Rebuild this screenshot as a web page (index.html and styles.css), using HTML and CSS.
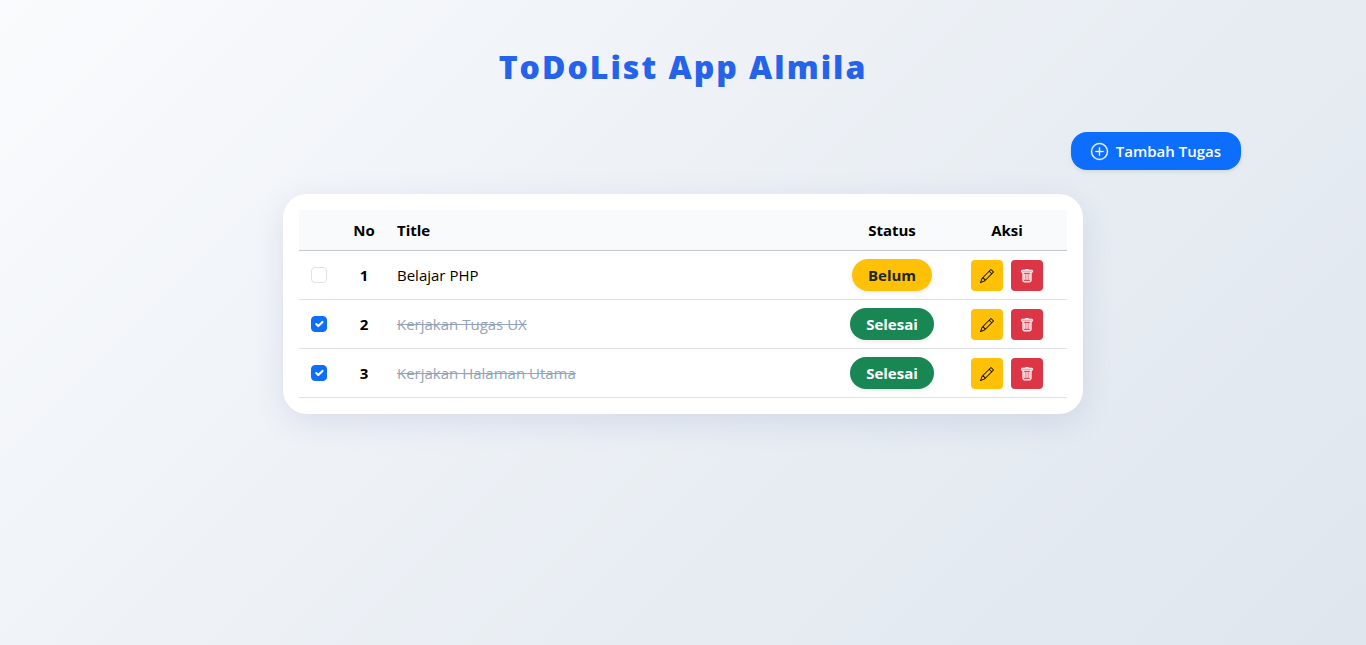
FILE: index.html
```html
<!DOCTYPE html>
<html lang="id">
<head>
<meta charset="utf-8">
<meta name="viewport" content="width=device-width, initial-scale=1">
<title>ToDoList App Almila</title>
<link rel="stylesheet" href="styles.css">
</head>
<body>
<svg class="sprite" aria-hidden="true">
  <symbol id="pencil" viewBox="0 0 16 16"><path d="M12.146.146a.5.5 0 0 1 .708 0l3 3a.5.5 0 0 1 0 .708l-10 10a.5.5 0 0 1-.168.11l-5 2a.5.5 0 0 1-.65-.65l2-5a.5.5 0 0 1 .11-.168zM11.207 2.5 13.5 4.793 14.793 3.5 12.5 1.207zm1.586 3L10.5 3.207 4 9.707V10h.5a.5.5 0 0 1 .5.5v.5h.5a.5.5 0 0 1 .5.5v.5h.293zm-9.761 5.175-.106.106-1.528 3.821 3.821-1.528.106-.106A.5.5 0 0 1 5 12.5V12h-.5a.5.5 0 0 1-.5-.5V11h-.5a.5.5 0 0 1-.468-.325"/></symbol>
  <symbol id="trash" viewBox="0 0 16 16"><path d="M5.500 5.500A.5.5 0 0 1 6 6v6a.5.5 0 0 1-1 0V6a.5.5 0 0 1 .5-.5m2.500 0a.5.5 0 0 1 .5.5v6a.5.5 0 0 1-1 0V6a.5.5 0 0 1 .5-.5m3 .5a.5.5 0 0 0-1 0v6a.5.5 0 0 0 1 0z"/><path d="M14.500 3a1 1 0 0 1-1 1H13v9a2 2 0 0 1-2 2H5a2 2 0 0 1-2-2V4h-.5a1 1 0 0 1-1-1V2a1 1 0 0 1 1-1H6a1 1 0 0 1 1-1h2a1 1 0 0 1 1 1h3.500a1 1 0 0 1 1 1zM4.118 4 4 4.059V13a1 1 0 0 0 1 1h6a1 1 0 0 0 1-1V4.059L11.882 4zM2.500 3h11V2h-11z"/></symbol>
</svg>
<main class="container">
  <h1 class="page-title">ToDoList App Almila</h1>
  <div class="toolbar">
    <button class="btn-add" type="button">
      <svg class="add-icon" viewBox="0 0 16 16" aria-hidden="true"><path d="M8 15A7 7 0 1 1 8 1a7 7 0 0 1 0 14m0 1A8 8 0 1 0 8 0a8 8 0 0 0 0 16"/><path d="M8 4a.5.5 0 0 1 .5.5v3h3a.5.5 0 0 1 0 1h-3v3a.5.5 0 0 1-1 0v-3h-3a.5.5 0 0 1 0-1h3v-3A.5.5 0 0 1 8 4"/></svg>
      Tambah Tugas
    </button>
  </div>
  <section class="card">
    <table class="tasks">
      <colgroup><col class="col-check"><col class="col-no"><col><col class="col-status"><col class="col-action"></colgroup>
      <thead>
        <tr><th></th><th scope="col">No</th><th class="title" scope="col">Title</th><th scope="col">Status</th><th scope="col">Aksi</th></tr>
      </thead>
      <tbody>
        <tr>
          <td><input class="check" type="checkbox" aria-labelledby="task-1"></td>
          <th scope="row">1</th>
          <td class="title" id="task-1">Belajar PHP</td>
          <td><span class="badge pending">Belum</span></td>
          <td><div class="actions"><button class="btn-icon edit" type="button" aria-label="Edit"><svg class="icon"><use href="#pencil"/></svg></button><button class="btn-icon delete" type="button" aria-label="Hapus"><svg class="icon"><use href="#trash"/></svg></button></div></td>
        </tr>
        <tr>
          <td><input class="check" type="checkbox" aria-labelledby="task-2" checked></td>
          <th scope="row">2</th>
          <td class="title done" id="task-2">Kerjakan Tugas UX</td>
          <td><span class="badge finished">Selesai</span></td>
          <td><div class="actions"><button class="btn-icon edit" type="button" aria-label="Edit"><svg class="icon"><use href="#pencil"/></svg></button><button class="btn-icon delete" type="button" aria-label="Hapus"><svg class="icon"><use href="#trash"/></svg></button></div></td>
        </tr>
        <tr>
          <td><input class="check" type="checkbox" aria-labelledby="task-3" checked></td>
          <th scope="row">3</th>
          <td class="title done" id="task-3">Kerjakan Halaman Utama</td>
          <td><span class="badge finished">Selesai</span></td>
          <td><div class="actions"><button class="btn-icon edit" type="button" aria-label="Edit"><svg class="icon"><use href="#pencil"/></svg></button><button class="btn-icon delete" type="button" aria-label="Hapus"><svg class="icon"><use href="#trash"/></svg></button></div></td>
        </tr>
      </tbody>
    </table>
  </section>
</main>
</body>
</html>
```
FILE: styles.css
```css
* { box-sizing: border-box; }
body {
  margin: 0;
  min-height: 100vh;
  background: linear-gradient(135deg, #fafbfd 0%, #f2f5f9 25%, #e8edf3 60%, #dfe6ee 100%);
  color: #000;
  font-family: "Segoe UI", "Open Sans", "Noto Sans", sans-serif;
  font-size: 15px;
  line-height: 24px;
}
.sprite { display: none; }
.container { max-width: 1140px; margin: 0 auto; padding: 48px 12px; }
.page-title {
  margin: 0 0 46px;
  color: #2563eb;
  font-size: 32px;
  font-weight: 800;
  line-height: 38px;
  letter-spacing: 2px;
  text-align: center;
}
.toolbar { display: flex; justify-content: flex-end; margin-bottom: 24px; }
.btn-add {
  display: flex;
  align-items: center;
  gap: 8px;
  padding: 7px 20px;
  border: 0;
  border-radius: 16px;
  background: #0d6efd;
  color: #fff;
  font: inherit;
  font-weight: 600;
  box-shadow: 0 2px 4px rgba(0, 0, 0, .08);
}
.add-icon { width: 17px; height: 17px; fill: currentColor; stroke: currentColor; stroke-width: .3; overflow: visible; }
.card {
  max-width: 800px;
  margin: 0 auto;
  padding: 16px;
  border-radius: 24px;
  background: #fff;
  box-shadow: 0 8px 32px rgba(31, 38, 135, .1);
}
.tasks { width: 100%; border-collapse: separate; border-spacing: 0; table-layout: fixed; }
.col-check { width: 40px; }
.col-no { width: 50px; }
.col-status { width: 110px; }
.col-action { width: 120px; }
.tasks th, .tasks td {
  padding: 8px;
  border-bottom: 1px solid #dee2e6;
  text-align: center;
  vertical-align: middle;
}
.tasks thead th { background: #f8fafc; border-bottom-color: #c6c7c8; }
.tasks .title { text-align: left; }
.tasks .done { color: #94a3b8; text-decoration: line-through; }
.check {
  display: block;
  appearance: none;
  width: 16px;
  height: 16px;
  margin: 0 auto;
  border: 1px solid #dee2e6;
  border-radius: 4px;
  background: #fff;
}
.check:checked {
  border-color: #0d6efd;
  background: #0d6efd url("data:image/svg+xml,%3Csvg xmlns='http://www.w3.org/2000/svg' viewBox='0 0 20 20'%3E%3Cpath fill='none' stroke='%23fff' stroke-linecap='round' stroke-linejoin='round' stroke-width='3' d='m6 10 3 3 6-6'/%3E%3C/svg%3E") center / contain no-repeat;
}
.badge {
  display: block;
  width: fit-content;
  margin: 0 auto;
  padding: 4px 16px;
  border-radius: 16px;
  font-weight: 700;
  box-shadow: 0 2px 4px rgba(0, 0, 0, .08);
}
.pending { background: #ffc107; color: #212529; }
.finished { background: #198754; color: #fff; }
.actions { display: flex; justify-content: center; gap: 8px; }
.btn-icon {
  display: flex;
  align-items: center;
  justify-content: center;
  width: 32px;
  height: 31px;
  padding: 2px 0 0;
  border: 0;
  border-radius: 4px;
}
.edit { background: #ffc107; color: #000; }
.delete { background: #dc3545; color: #fff; }
.icon { width: 14px; height: 14px; fill: currentColor; }
.delete .icon { stroke: currentColor; stroke-width: .5; }
```
